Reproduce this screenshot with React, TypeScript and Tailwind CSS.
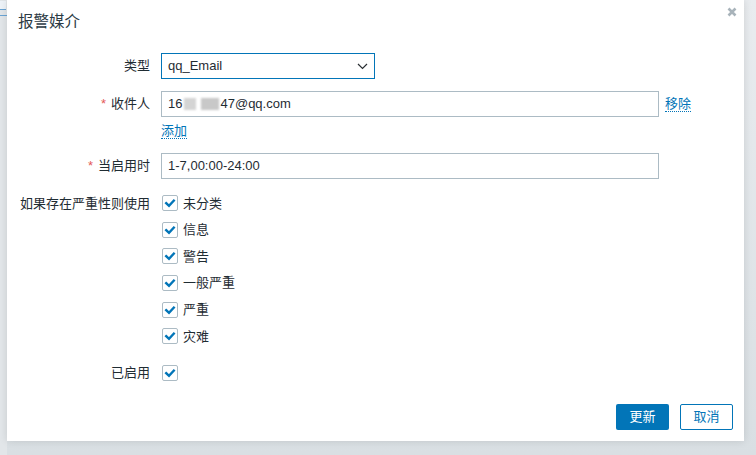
import React from "react";

const FONT = "font-['Liberation_Sans','Noto_Sans_CJK_SC',Arial,sans-serif]";

function Check() {
  return (
    <span className="flex h-[16px] w-[16px] items-center justify-center rounded-[2px] border border-[#acbbc4] bg-white">
      <svg width="12" height="12" viewBox="0 0 12 12">
        <path d="M2.2 6.2 L5 8.8 L9.8 3.6" fill="none" stroke="#0275b8" strokeWidth="2.4" strokeLinecap="square" />
      </svg>
    </span>
  );
}

function Row({ label, req, children, className = "" }: { label: string; req?: boolean; children: React.ReactNode; className?: string }) {
  return (
    <div className={`grid grid-cols-[143px_1fr] gap-x-[11px] ${className}`}>
      <div className="flex items-center justify-end text-[13px] text-[#1f2c33]">
        {req && <span className="mr-[5px] text-[#e45959]">*</span>}
        {label}
      </div>
      <div className="flex items-center">{children}</div>
    </div>
  );
}

const severities = ["未分类", "信息", "警告", "一般严重", "严重", "灾难"];

export default function App() {
  return (
    <div className={`relative h-[455px] w-[756px] overflow-hidden bg-gradient-to-b from-[#e9ecef] to-[#d9dfe3] ${FONT}`}>
      <div className="absolute left-0 top-0 h-[455px] w-[7px] bg-[#e2e6e9]">
        <div className="mt-[1px] h-[9px] w-[6px] border-b border-[#6aa4d4] bg-[#eef3f8]" />
        <div className="mt-[5px] h-[1px] w-[7px] bg-[#6aa4d4]" />
      </div>
      <div className="relative ml-[7px] h-[441px] w-[737px] bg-white shadow-[0_0_8px_rgba(0,0,0,0.12)]">
        <div className="flex h-[44px] items-center pl-[11px] text-[15.5px] text-[#2b3a44]">报警媒介</div>
        <svg className="absolute right-[7px] top-[7px]" width="10" height="10" viewBox="0 0 10 10">
          <path d="M1.5 1.5 L8.5 8.5 M8.5 1.5 L1.5 8.5" stroke="#a8b3ba" strokeWidth="2.6" />
        </svg>

        <div className="pt-[9px]">
          <Row label="类型" className="h-[26px]">
            <div className="flex h-[26px] w-[214px] items-center justify-between border border-[#0275b8] pl-[6px] pr-[6px] text-[13px] text-[#1f2c33]">
              <span>qq_Email</span>
              <svg width="11" height="7" viewBox="0 0 11 7">
                <path d="M1 1 L5.5 5.5 L10 1" fill="none" stroke="#2a2f33" strokeWidth="1.2" />
              </svg>
            </div>
          </Row>
          <Row label="收件人" req className="mt-[12px] h-[26px]">
            <div className="flex h-[26px] w-[498px] items-center border border-[#acbbc4] pl-[6px] text-[13px] text-[#1f2c33]">
              <span>16</span>
              <span className="ml-[2px] mr-[1px] flex items-center gap-[5px] blur-[1px]">
                <span className="h-[12px] w-[12px] bg-[#d4d4d4]" />
                <span className="h-[12px] w-[18px] bg-[#c8c8c8]" />
              </span>
              <span>47@qq.com</span>
            </div>
            <span className="ml-[6px] border-b border-dotted border-[#0275b8] text-[13px] leading-[15px] text-[#0275b8]">移除</span>
          </Row>
          <Row label="" className="mt-[4px] h-[20px]">
            <span className="border-b border-dotted border-[#0275b8] text-[13px] leading-[15px] text-[#0275b8]">添加</span>
          </Row>
          <Row label="当启用时" req className="mt-[12px] h-[26px]">
            <div className="flex h-[26px] w-[498px] items-center border border-[#acbbc4] pl-[6px] text-[13px] text-[#1f2c33]">
              1-7,00:00-24:00
            </div>
          </Row>

          <div className="mt-[11px] grid grid-cols-[143px_1fr] gap-x-[11px]">
            <div className="flex h-[26.6px] items-center justify-end text-[13px] text-[#1f2c33]">如果存在严重性则使用</div>
            <div className="flex flex-col">
              {severities.map((s) => (
                <div key={s} className="flex h-[26.6px] items-center gap-[5px] pl-[1px] text-[13px] text-[#1f2c33]">
                  <Check />
                  <span>{s}</span>
                </div>
              ))}
            </div>
          </div>

          <Row label="已启用" className="mt-[10px] h-[26px]">
            <span className="pl-[1px]">
              <Check />
            </span>
          </Row>

          <div className="mt-[18px] flex justify-end gap-[11px] pr-[11px]">
            <button className="flex h-[26px] w-[53px] items-center justify-center rounded-[2px] bg-[#0275b8] text-[13px] text-white">更新</button>
            <button className="flex h-[26px] w-[53px] items-center justify-center rounded-[2px] border border-[#0275b8] bg-white text-[13px] text-[#0275b8]">取消</button>
          </div>
        </div>
      </div>
    </div>
  );
}
